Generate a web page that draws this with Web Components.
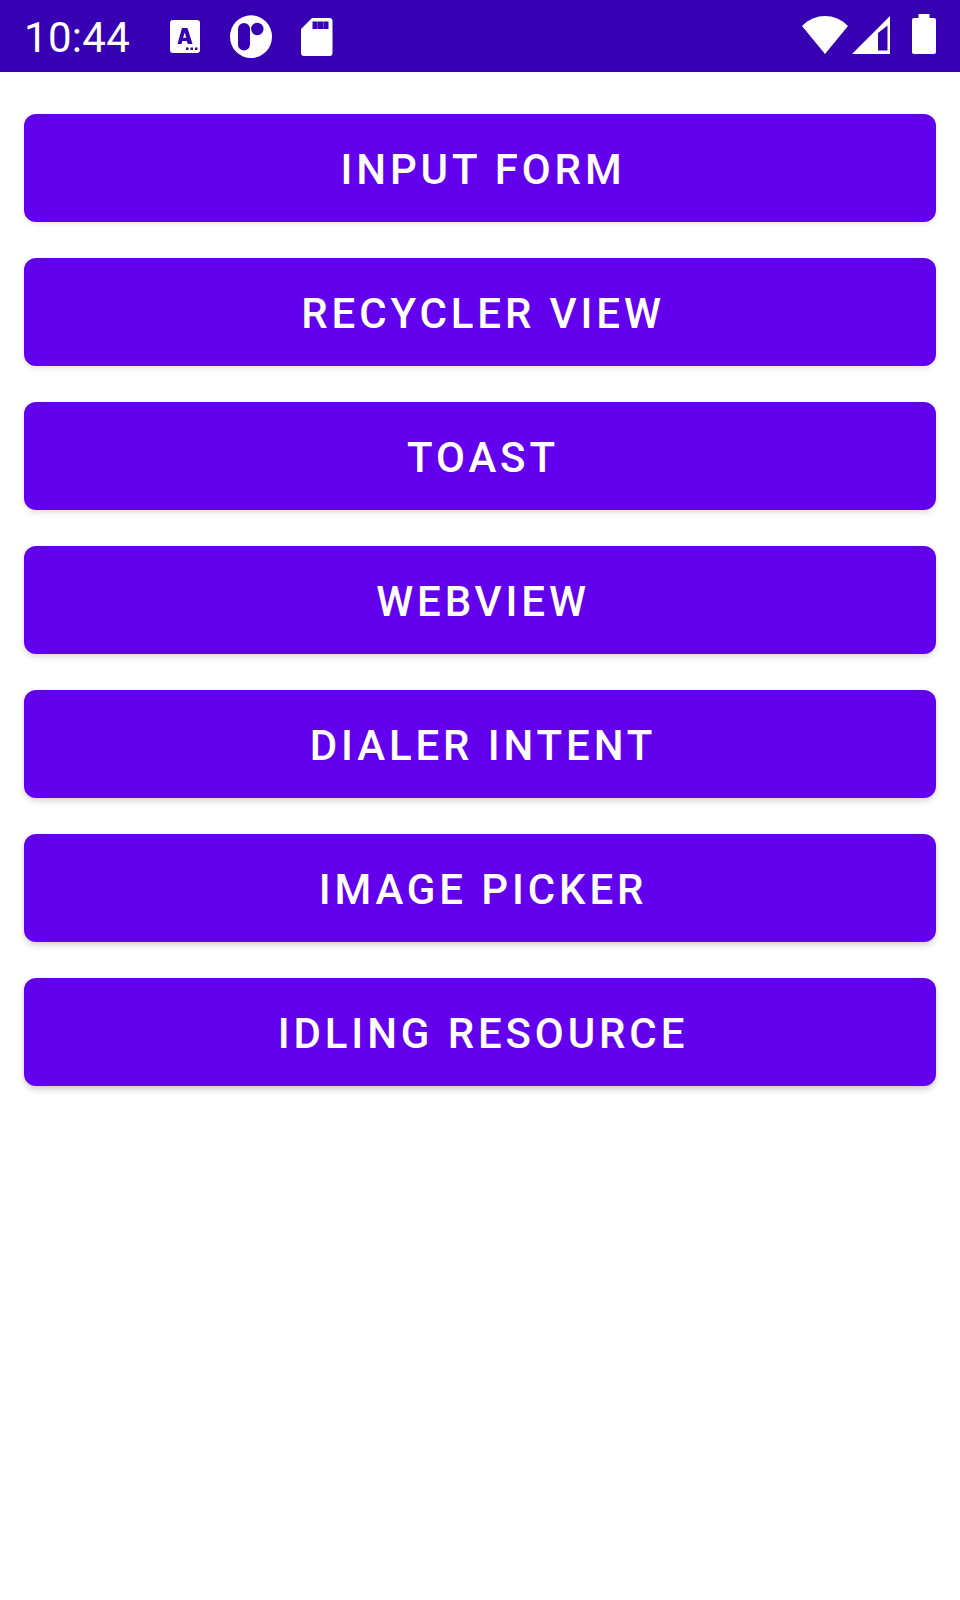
<!DOCTYPE html>
<html lang="en">
<head>
<meta charset="utf-8">
<title>Main menu</title>
<style>
html,body{margin:0;padding:0;background:#fff}
body{font-family:Roboto,"Liberation Sans",sans-serif}
</style>
</head>
<body>
<app-screen>
  <status-bar slot="status">10:44</status-bar>
  <menu-button style="--drop:.03">INPUT FORM</menu-button>
  <menu-button style="--drop:.05">RECYCLER VIEW</menu-button>
  <menu-button style="--drop:.07">TOAST</menu-button>
  <menu-button style="--drop:.09">WEBVIEW</menu-button>
  <menu-button style="--drop:.11">DIALER INTENT</menu-button>
  <menu-button style="--drop:.13">IMAGE PICKER</menu-button>
  <menu-button style="--drop:.15">IDLING RESOURCE</menu-button>
</app-screen>
<script>
function define(name, markup) {
  customElements.define(name, class extends HTMLElement {
    constructor() {
      super();
      this.attachShadow({mode: 'open'}).innerHTML = markup;
    }
  });
}

define('app-screen', `
<style>
:host{display:flex;flex-direction:column;width:960px;height:1600px;background:#fff;overflow:hidden}
main{display:flex;flex-direction:column;gap:36px;padding:42px 24px}
</style>
<slot name="status"></slot><main><slot></slot></main>`);

define('status-bar', `
<style>
:host{display:flex;align-items:flex-start;box-sizing:border-box;flex:none;height:72px;padding:0 24px;background:#3700b3;color:#fff;font-size:42px;line-height:76px}
svg{display:block;flex:none;fill:#fff}
.clock{width:146px;white-space:nowrap;letter-spacing:.3px}
.spacer{flex:1}
</style>
<span class="clock"><slot></slot></span>
<svg width="170" height="72" viewBox="170 0 170 72">
  <rect x="170" y="20" width="30" height="33" rx="3"/>
  <path fill="#3700b3" fill-rule="evenodd" d="M182 28h5.500l5 16h-4.700l-.9-3h-4.500l-.9 3h-4zM184.700 32.500l-1.600 5.300h3.200z"/>
  <path fill="#3700b3" d="M186 47.500h2.500v2.500H186zM190.500 47.500h2.500v2.500h-2.500zM195 47.500h2.500v2.500H195z"/>
  <ellipse cx="251" cy="36.700" rx="21" ry="21.400"/>
  <rect x="238" y="23" width="12" height="27.500" rx="6" fill="#3700b3"/>
  <circle cx="257.300" cy="29" r="6.200" fill="#3700b3"/>
  <path d="M312 18h17.500a3 3 0 0 1 3 3v32a3 3 0 0 1-3 3h-25.500a3 3 0 0 1-3-3V29z"/>
  <path fill="#3700b3" d="M312.500 21.500h16V29h-16z"/>
  <path fill="#3700b3" fill-opacity=".75" stroke="#fff" stroke-opacity=".3" d="M317.500 21.500V29M323.500 21.500V29"/>
</svg>
<span class="spacer"></span>
<svg width="134" height="72" viewBox="802 0 134 72">
  <path d="M825 54L802 26C815 12.700 835 12.700 848 26z"/>
  <path fill-rule="evenodd" d="M852 54L890 16v38zM878 50.500h9.500V25.500L878 33z"/>
  <path d="M914 18h4.500v-4h11v4h4.500a2 2 0 0 1 2 2v32a2 2 0 0 1-2 2h-20a2 2 0 0 1-2-2V20a2 2 0 0 1 2-2z"/>
</svg>`);

define('menu-button', `
<style>
:host{display:block}
button{display:block;box-sizing:border-box;width:100%;height:108px;margin:0;padding:2px 0 0 6px;border:0;border-radius:12px;background:#6200ee;color:#fff;font:500 42px/108px Roboto,"Liberation Sans",sans-serif;letter-spacing:3.88px;text-align:center;white-space:nowrap;box-shadow:0 4px 6px rgba(0,0,0,var(--drop)),0 1px 5px rgba(0,0,0,.08)}
</style>
<button type="button"><slot></slot></button>`);
</script>
</body>
</html>
